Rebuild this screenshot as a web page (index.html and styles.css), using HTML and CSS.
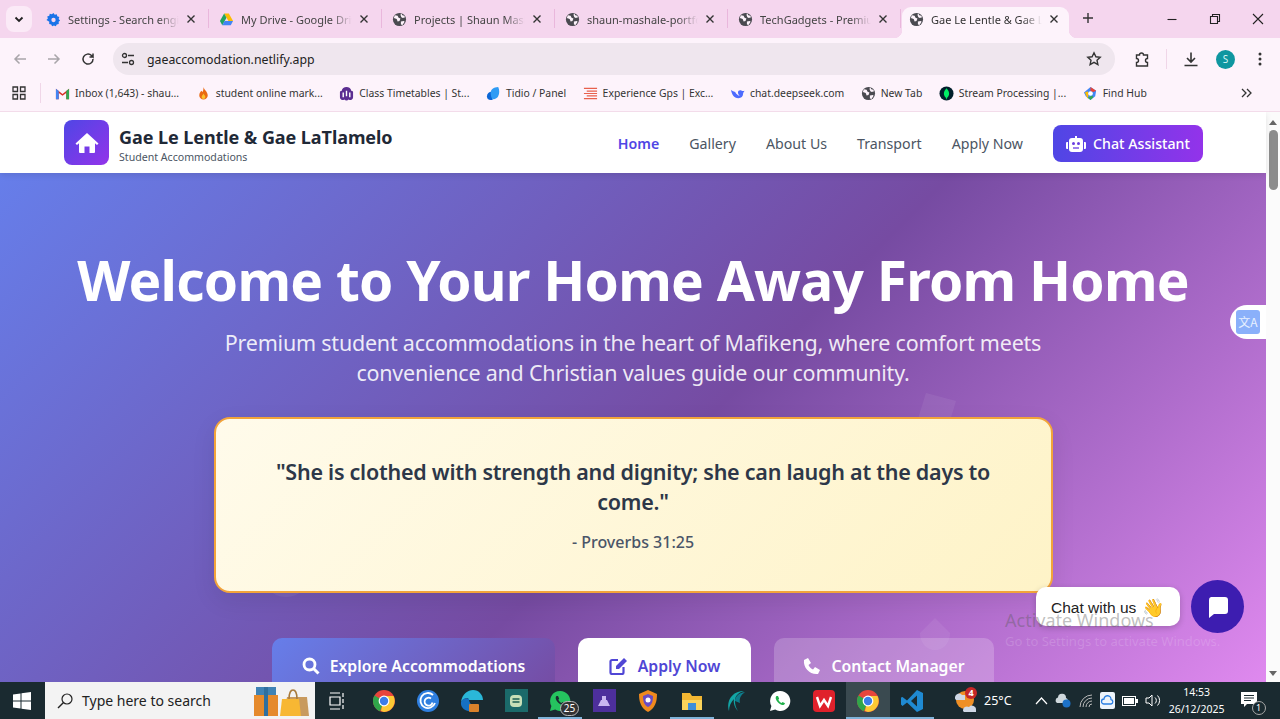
FILE: index.html
```html
<!DOCTYPE html>
<html lang="en">
<head>
  <meta charset="UTF-8" />
  <title>Gae Le Lentle &amp; Gae LaTlamelo</title>
  <link rel="stylesheet" href="styles.css">
</head>
<body>
  <svg class="defs" width="0" height="0">
    <symbol id="globe" viewBox="0 0 16 16"><circle cx="8" cy="8" r="7" fill="#4a4a50"/><path d="M3 3.500l3 .5 1 2 2 1-1 2.500-2 .5-1-2.500-3-1zM10 1.500l1 2 2 .5 1 1.500-2.500 1-1.500-1-1-2.500zM9.500 10l3-.5 1 1-2.500 3.500-1.500-1z" fill="#fdf3fb"/></symbol>
    <symbol id="chrome" viewBox="0 0 24 24"><circle cx="12" cy="12" r="11" fill="#e8453c"/><path d="M12 12L2.500 6.500A11 11 0 0 0 8 22.300z" fill="#30a64a"/><path d="M12 7h9.500A11 11 0 0 1 12 23l-3-1z" fill="#fcc934"/><circle cx="12" cy="12" r="5.400" fill="#fff"/><circle cx="12" cy="12" r="4.200" fill="#3b7de8"/></symbol>
    <symbol id="close" viewBox="0 0 10 10"><path d="M1.500 1.500l7 7M8.500 1.500l-7 7" stroke="#333" stroke-width="1.400" fill="none"/></symbol>
    <symbol id="wa" viewBox="0 0 24 24"><path d="M12 2a10 10 0 0 0-8.600 15L2 22l5.200-1.400A10 10 0 1 0 12 2z" fill="currentColor"/><path d="M8.500 7c-1 1-1.200 2.500 0 4.500 1.300 2.200 3.200 3.800 5.500 4.500 1.500.4 2.800-.5 3-1.800l-2.400-1.300-1 1.100c-1.400-.6-2.600-1.800-3.300-3.200l.9-1L10 7z" fill="var(--wa-in)"/></symbol>
  </svg>

  <div class="tabstrip">
    <button class="tab-search"><svg width="10" height="10" viewBox="0 0 10 10"><path d="M1.500 3.500L5 7l3.500-3.500" stroke="#222" stroke-width="1.800" fill="none"/></svg></button>
    <div class="tab">
      <svg class="fav" viewBox="0 0 16 16"><path d="M8 1l1.300 1.800 2.200-.5.500 2.200 2.200.7-.7 2.300 1.500 1.500-1.500 1.500.1 2.200-2.200.5-.9 2.100-2-.9-2 .9-.9-2.100-2.200-.5.1-2.200L.5 8.500 2 7l-.7-2.300 2.200-.7.500-2.200 2.200.5z" fill="#1a73e8"/><circle cx="8" cy="8.500" r="2.300" fill="#f5d6ee"/></svg>
      <span class="tab-name">Settings - Search engine</span>
      <svg class="tab-x"><use href="#close"/></svg>
    </div>
    <div class="tab">
      <svg class="fav" viewBox="0 0 16 16"><path d="M5.500 1.500h5L15 9.500h-5z" fill="#fbbc04"/><path d="M5.500 1.500L1 9.500l2.500 4.500L8 6z" fill="#1fa463"/><path d="M3.500 14h9l2.500-4.500H6z" fill="#4285f4"/></svg>
      <span class="tab-name">My Drive - Google Drive</span>
      <svg class="tab-x"><use href="#close"/></svg>
    </div>
    <div class="tab">
      <svg class="fav"><use href="#globe"/></svg>
      <span class="tab-name">Projects | Shaun Mashale</span>
      <svg class="tab-x"><use href="#close"/></svg>
    </div>
    <div class="tab">
      <svg class="fav"><use href="#globe"/></svg>
      <span class="tab-name">shaun-mashale-portfolio</span>
      <svg class="tab-x"><use href="#close"/></svg>
    </div>
    <div class="tab">
      <svg class="fav"><use href="#globe"/></svg>
      <span class="tab-name">TechGadgets - Premium</span>
      <svg class="tab-x"><use href="#close"/></svg>
    </div>
    <div class="tab active">
      <svg class="fav"><use href="#globe"/></svg>
      <span class="tab-name">Gae Le Lentle &amp; Gae LaTlamelo</span>
      <svg class="tab-x"><use href="#close"/></svg>
    </div>
    <svg class="new-tab" width="12" height="12" viewBox="0 0 12 12"><path d="M6 1v10M1 6h10" stroke="#333" stroke-width="1.400"/></svg>
    <div class="win-btns">
      <svg width="12" height="12" viewBox="0 0 12 12"><path d="M1.500 6.500h9" stroke="#222" stroke-width="1.100"/></svg>
      <svg width="12" height="12" viewBox="0 0 12 12"><path d="M1.500 3.500h7v7h-7zM3.500 3.500v-2h7v7h-2" stroke="#222" stroke-width="1.100" fill="none"/></svg>
      <svg width="12" height="12" viewBox="0 0 12 12"><path d="M1 1l10 10M11 1L1 11" stroke="#222" stroke-width="1.100"/></svg>
    </div>
  </div>

  <div class="toolbar">
    <svg class="tool dim" viewBox="0 0 16 16"><path d="M14 8H3M7.500 3.500L3 8l4.500 4.500" stroke="#a9a5aa" stroke-width="1.500" fill="none"/></svg>
    <svg class="tool dim" viewBox="0 0 16 16"><path d="M2 8h11M8.500 3.500L13 8l-4.500 4.500" stroke="#a9a5aa" stroke-width="1.500" fill="none"/></svg>
    <svg class="tool" viewBox="0 0 16 16"><path d="M13 8a5 5 0 1 1-1.500-3.500L13 6V2.500M13 6H9.500" stroke="#333" stroke-width="1.500" fill="none"/></svg>
    <div class="omnibox">
      <svg class="site-icon" width="14" height="14" viewBox="0 0 14 14"><circle cx="3.500" cy="3.500" r="2" stroke="#333" stroke-width="1.300" fill="none"/><path d="M7 3.500h6M1 10.500h6" stroke="#333" stroke-width="1.300"/><circle cx="10.500" cy="10.500" r="2" stroke="#333" stroke-width="1.300" fill="none"/></svg>
      <span class="url">gaeaccomodation.netlify.app</span>
      <svg class="star" width="16" height="16" viewBox="0 0 16 16"><path d="M8 1.800l1.900 4 4.300.5-3.200 3 .9 4.300L8 11.400l-3.900 2.200.9-4.300-3.200-3 4.300-.5z" stroke="#333" stroke-width="1.400" fill="none"/></svg>
    </div>
    <svg class="tool ext" viewBox="0 0 16 16"><path d="M2.500 4h3a2 2 0 0 1 4 0h4v3.500a2 2 0 0 0 0 4V15h-11v-3.500a2 2 0 0 0 0-4z" stroke="#333" stroke-width="1.400" fill="none"/></svg>
    <span class="tool-sep"></span>
    <svg class="tool download" viewBox="0 0 16 16"><path d="M8 1.500v9M4 7l4 4 4-4M1.500 14.500h13" stroke="#333" stroke-width="1.600" fill="none"/></svg>
    <span class="avatar">S</span>
    <svg class="tool menu" viewBox="0 0 16 16"><circle cx="8" cy="3" r="1.500" fill="#333"/><circle cx="8" cy="8" r="1.500" fill="#333"/><circle cx="8" cy="13" r="1.500" fill="#333"/></svg>
  </div>

  <div class="bookmarks">
    <svg class="apps" width="14" height="14" viewBox="0 0 14 14"><path d="M1 1h4.500v4.500H1zM8.500 1H13v4.500H8.500zM1 8.500h4.500V13H1zM8.500 8.500H13V13H8.500z" stroke="#333" stroke-width="1.300" fill="none"/></svg>
    <span class="bm-sep"></span>
    <div class="bm"><svg class="fav" viewBox="0 0 16 16"><path d="M1 14V3l7 5.500L15 3v11h-3V7.500L8 10.500 4 7.500V14z" fill="#d93025"/><path d="M1 14V3l3 2.300V14z" fill="#4285f4"/><path d="M15 14V3l-3 2.300V14z" fill="#34a853"/></svg>Inbox (1,643) - shau...</div>
    <div class="bm"><svg class="fav" viewBox="0 0 16 16"><path d="M8 1c.5 3 4.500 5 4.500 9a4.500 4.500 0 0 1-9 0C3.500 7 5 6.500 5.500 5c.8.5 1.300 1 1.500 1.500C7.800 5 8 3 8 1z" fill="#ea6a12"/><path d="M8 8c.5 1.500 2 2.300 2 3.800a2 2 0 0 1-4 0C6 10.500 7.500 9.500 8 8z" fill="#fbc02d"/></svg>student online mark...</div>
    <div class="bm"><svg class="fav" viewBox="0 0 16 16"><path d="M1 6.500a2 2 0 0 1 2-1.500c0-2.500 2.500-4 5-4s5 1.500 5 4a2 2 0 0 1 2 1.500V12a3 3 0 0 1-4.700 2.500 3 3 0 0 1-4.600 0A3 3 0 0 1 1 12z" fill="#5b2d91"/><path d="M4.500 7v5M8 5v6M11.500 7v5" stroke="#fff" stroke-width="1.500"/></svg>Class Timetables | St...</div>
    <div class="bm"><svg class="fav" viewBox="0 0 16 16"><path d="M1 11a5 5 0 0 1 5-5h1v9H5a4 4 0 0 1-4-4z" fill="#0b66d6"/><path d="M5 7c0-3 3-6 8-6 1.500 3 1.500 7 0 10-1 2-3 3-5 3-2 0-3-3-3-7z" fill="#2f9bf4"/></svg>Tidio / Panel</div>
    <div class="bm"><svg class="fav" viewBox="0 0 16 16"><path d="M1 2.500h14M4 5.500h11M1 8h14M4 10.500h11M1 13.500h14" stroke="#e8604c" stroke-width="1.300"/></svg>Experience Gps | Exc...</div>
    <div class="bm"><svg class="fav" viewBox="0 0 16 16"><path d="M1 4c1 5 3 9 8 9 3 0 5-2 5-5 0-1 1-2 1.500-3-1 .5-2 .5-3 0-2-1-4 0-4 2 0 1.500 1 3 2 3.500-2 0-4-2-5-4C3.500 5.500 2 5 1 4z" fill="#4d6bfe"/></svg>chat.deepseek.com</div>
    <div class="bm"><svg class="fav"><use href="#globe"/></svg>New Tab</div>
    <div class="bm"><svg class="fav" viewBox="0 0 16 16"><circle cx="8" cy="8" r="7.500" fill="#001e2b"/><path d="M8 2.500c2 2 2.800 4 2.800 5.800S9.500 11.800 8.400 12.800V14h-.8v-1.200C6.500 11.800 5.200 10.100 5.200 8.300S6 4.500 8 2.500z" fill="#00ed64"/></svg>Stream Processing |...</div>
    <div class="bm"><svg class="fav" viewBox="0 0 16 16"><path d="M8 1l6 4-1 6-5 4-5-4-2-4z" fill="#4285f4"/><path d="M8 1l6 4-3 1.500-3-1z" fill="#ea4335"/><path d="M2 7l3-1.500 1 3-1 5z" fill="#fbbc04"/><path d="M5 12.500L8 15l3-3-1-2z" fill="#34a853"/><circle cx="8" cy="8" r="2.500" fill="#fff"/></svg>Find Hub</div>
    <svg class="bm-more" width="12" height="12" viewBox="0 0 12 12"><path d="M2 2l4 4-4 4M7 2l4 4-4 4" stroke="#333" stroke-width="1.300" fill="none"/></svg>
  </div>

  <div class="viewport">
    <div class="page">
      <nav class="site-nav">
        <div class="brand">
          <span class="brand-mark"><svg width="24" height="22" viewBox="0 0 24 22"><path d="M12 1L.5 11.500l1.500 1.500L4 11.300V20a1 1 0 0 0 1 1h4.500v-6.500h5V21H19a1 1 0 0 0 1-1v-8.700l2 1.700 1.500-1.500z" fill="#fff"/></svg></span>
          <div class="brand-text">
            <div class="brand-name">Gae Le Lentle &amp; Gae LaTlamelo</div>
            <div class="brand-sub">Student Accommodations</div>
          </div>
        </div>
        <div class="nav-links">
          <a class="current">Home</a>
          <a>Gallery</a>
          <a>About Us</a>
          <a>Transport</a>
          <a>Apply Now</a>
          <a class="chat-btn"><svg width="20" height="16" viewBox="0 0 20 16"><path d="M9 0h2v2h3a3 3 0 0 1 3 3v8a3 3 0 0 1-3 3H6a3 3 0 0 1-3-3V5a3 3 0 0 1 3-3h3zM0 7a1 1 0 0 1 1-1h1v7H1a1 1 0 0 1-1-1zM18 6h1a1 1 0 0 1 1 1v5a1 1 0 0 1-1 1h-1z" fill="#fff"/><circle cx="7.500" cy="7.500" r="1.500" fill="#6a3de0"/><circle cx="12.500" cy="7.500" r="1.500" fill="#6a3de0"/><path d="M7 12h6" stroke="#6a3de0" stroke-width="1.300"/></svg>Chat Assistant</a>
        </div>
      </nav>

      <section class="hero">
        <svg class="ghost ghost-doc" width="40" height="34" viewBox="0 0 40 34"><path d="M10 0l30 8-8 26L2 26z" fill="#fff"/></svg>
        <svg class="ghost ghost-drop" width="30" height="32" viewBox="0 0 30 32"><path d="M15 0l15 15c0 9-6 17-15 17S0 24 0 15z" fill="#fff"/></svg>
        <svg class="ghost ghost-blob" width="64" height="40" viewBox="0 0 64 40"><circle cx="34" cy="14" r="24" fill="#fff"/><path d="M0 22h16v8H0z" fill="#fff"/></svg>
        <h1>Welcome to Your Home Away From Home</h1>
        <p class="lead">Premium student accommodations in the heart of Mafikeng, where comfort meets convenience and Christian values guide our community.</p>
        <div class="verse">
          <p class="verse-text">"She is clothed with strength and dignity; she can laugh at the days to come."</p>
          <p class="verse-ref">- Proverbs 31:25</p>
        </div>
        <div class="cta-row">
          <a class="cta cta-blue"><svg width="18" height="18" viewBox="0 0 18 18"><circle cx="7.500" cy="7.500" r="5.500" stroke="#fff" stroke-width="2.800" fill="none"/><path d="M11.500 11.500l5 5" stroke="#fff" stroke-width="3"/></svg>Explore Accommodations</a>
          <a class="cta cta-white"><svg width="19" height="18" viewBox="0 0 19 18"><path d="M9 3H3a1.500 1.500 0 0 0-1.500 1.500v11A1.500 1.500 0 0 0 3 17h10a1.500 1.500 0 0 0 1.500-1.500V10" stroke="#5046d5" stroke-width="2.200" fill="none"/><path d="M7 9L15 1l3 3-8 8H7z" fill="#5046d5"/></svg>Apply Now</a>
          <a class="cta cta-glass"><svg width="18" height="18" viewBox="0 0 18 18"><path d="M1 3l4-2 3 5-2.500 2c1 2 2.500 3.500 4.500 4.500l2-2.500 5 3-2 4c-8 1-15-6-14-14z" fill="#fff"/></svg>Contact Manager</a>
        </div>

        <div class="translate-tab"><span class="translate-icon">文A</span></div>
        <div class="chat-bubble">Chat with us <span class="wave">👋</span></div>
        <div class="watermark">
          <div class="wm-title">Activate Windows</div>
          <div class="wm-sub">Go to Settings to activate Windows.</div>
        </div>
        <div class="chat-launcher"><svg width="24" height="24" viewBox="0 0 24 24"><path d="M5 2h14a3 3 0 0 1 3 3v11a3 3 0 0 1-3 3H8l-5 4V5a3 3 0 0 1 2-3z" fill="#fff"/></svg></div>
      </section>
    </div>
    <div class="scrollbar">
      <span class="arrow up"></span>
      <span class="thumb"></span>
      <span class="arrow down"></span>
    </div>
  </div>

  <div class="taskbar">
    <svg class="start" width="18" height="18" viewBox="0 0 18 18"><path d="M0 2.500l7.500-1v7H0zM8.500 1.300L18 0v8.500H8.500zM0 9.500h7.500v7L0 15.500zM8.500 9.500H18V18l-9.500-1.300z" fill="#fff"/></svg>
    <div class="search-box">
      <svg width="18" height="18" viewBox="0 0 18 18"><circle cx="11" cy="7" r="5" stroke="#222" stroke-width="1.200" fill="none"/><path d="M7.500 10.500L2 16" stroke="#222" stroke-width="1.400"/></svg>
      <span class="search-text">Type here to search</span>
      <svg class="gifts" width="58" height="34" viewBox="0 0 58 34"><path d="M3 11h24v21H3z" fill="#e58a2c"/><path d="M5 3h20v8H5z" fill="#3f83b5"/><path d="M13 3h4v29h-4z" fill="#2f6f9e"/><path d="M36 13h20l2 19H32z" fill="#c89a5e"/><path d="M31 15h17l2 17H29z" fill="#f7b733"/><path d="M38 15c0-12 8-12 8 0" stroke="#a87b3c" stroke-width="1.500" fill="none"/></svg>
    </div>
    <div class="tb-slot task-view"><svg width="16" height="18" viewBox="0 0 16 18"><path d="M1 1h10M1 17h10M1 5h10v8H1zM14 1v4M14 7v4M14 13v4" stroke="#fff" stroke-width="1.200" fill="none"/></svg></div>
    <div class="tb-slot"><svg class="tb-icon"><use href="#chrome"/></svg></div>
    <div class="tb-slot"><svg class="tb-icon" viewBox="0 0 24 24"><circle cx="12" cy="12" r="11" fill="#2f7fe0"/><path d="M17 6a7.500 7.500 0 1 0 2 8M15 9.500a4 4 0 1 0 1.500 4" stroke="#fff" stroke-width="1.800" fill="none"/></svg></div>
    <div class="tb-slot"><svg class="tb-icon" viewBox="0 0 24 24"><path d="M1 13C2 5 8 1 13 1c6 0 10 5 10 10H9c0-3-6-2-8 2z" fill="#2ab7d8"/><path d="M1 13c1-3 5-5 8-3 0 4 3 7 6 7v5c-7 2-15-2-14-9z" fill="#1570c4"/><rect x="9" y="15" width="10" height="8" rx="1" fill="#d9822b"/></svg></div>
    <div class="tb-slot"><span class="square teal"><svg width="16" height="16" viewBox="0 0 16 16"><rect x="2" y="2" width="12" height="12" rx="4" fill="#c7e0b8"/><path d="M4.500 6h7M4.500 9h7" stroke="#1b5e52" stroke-width="1.300"/></svg></span></div>
    <div class="tb-slot running"><svg class="tb-icon wa-green"><use href="#wa"/></svg><span class="count">25</span></div>
    <div class="tb-slot"><span class="square purple"><svg width="14" height="14" viewBox="0 0 14 14"><path d="M1 12h12L10 6H9V2H5v4H4z" fill="#c9b6f0"/></svg></span></div>
    <div class="tb-slot"><svg class="tb-icon" viewBox="0 0 24 24"><path d="M12 1l9 4c0 8-2 14-9 18C5 19 3 13 3 5z" fill="#f08a1d"/><path d="M12 5l5 2c0 5-1 9-5 11-4-2-5-6-5-11z" fill="#6a4bc4"/><circle cx="12" cy="11" r="2.500" fill="#fff"/></svg></div>
    <div class="tb-slot running"><svg class="tb-icon" viewBox="0 0 24 24"><path d="M2 4h8l2 3h10v14H2z" fill="#f2b632"/><path d="M2 11h20v10H2z" fill="#fbd45b"/><rect x="8" y="14" width="8" height="7" fill="#3f8fd8"/></svg></div>
    <div class="tb-slot"><svg class="tb-icon" viewBox="0 0 24 24"><path d="M5 22C2 12 8 2 20 2c-7 2-9 6-9 10 0 4 1 7 3 10-3-3-5-8-4-12-3 3-5 7-5 12z" fill="#12a5a5"/><path d="M11 12c0-4 3-8 10-9-4 3-6 6-5 11" fill="#0d7c8c"/></svg></div>
    <div class="tb-slot"><svg class="tb-icon wa-white"><use href="#wa"/></svg></div>
    <div class="tb-slot"><svg class="tb-icon" viewBox="0 0 24 24"><rect x="1" y="1" width="22" height="22" rx="4" fill="#e0212b"/><path d="M5 8l3 9 4-6 4 6 3-9" stroke="#fff" stroke-width="2.400" fill="none"/></svg></div>
    <div class="tb-slot current-app"><svg class="tb-icon"><use href="#chrome"/></svg></div>
    <div class="tb-slot running"><svg class="tb-icon" viewBox="0 0 24 24"><path d="M17 1l6 3v16l-6 3-10-9.500-4.500 3.500L1 15.500V8.500L2.500 8 7 11.500z" fill="#1f8ad2"/><path d="M17 6.500L11 12l6 5.500z" fill="#1a2a30"/></svg></div>
    <div class="weather">
      <svg width="26" height="30" viewBox="0 0 26 30"><circle cx="12" cy="14" r="9" fill="#ef8f25"/><path d="M2 11a4 4 0 0 1 7-2h3v5H3a3 3 0 0 1-1-3zM10 25a4 4 0 0 1 6-4 4 4 0 0 1 7 3v2H11z" fill="#cfd8e6"/><circle cx="18" cy="7" r="6" fill="#c62828"/><text x="18" y="10" class="badge-num">4</text></svg>
      <span>25°C</span>
    </div>
    <div class="tray">
      <svg width="13" height="8" viewBox="0 0 13 8"><path d="M1 7l5.500-6L12 7" stroke="#fff" stroke-width="1.200" fill="none"/></svg>
      <svg width="16" height="15" viewBox="0 0 16 15"><path d="M2 10a3 3 0 0 1 1-5.500A4 4 0 0 1 11 5a3 3 0 0 1 1 5z" fill="#cfd8dc"/><circle cx="11.500" cy="10.500" r="4" fill="#1d72c8"/></svg>
      <svg width="15" height="15" viewBox="0 0 15 15"><path d="M2 14a12 12 0 0 1 12-12M5 14a9 9 0 0 1 9-9M8 14a6 6 0 0 1 6-6M11 14a3 3 0 0 1 3-3" stroke="#bbb" stroke-width="1" fill="none"/></svg>
      <svg width="15" height="17" viewBox="0 0 15 17"><rect width="15" height="17" rx="2" fill="#eef4fb"/><path d="M4 12a2.500 2.500 0 0 1 0-5 3.500 3.500 0 0 1 7 .5 2.300 2.300 0 0 1 0 4.500z" stroke="#2a7de1" stroke-width="1.300" fill="none"/></svg>
      <svg width="16" height="10" viewBox="0 0 16 10"><rect x=".5" y=".5" width="13" height="9" stroke="#fff" fill="none"/><rect x="2" y="2" width="10" height="6" fill="#fff"/><rect x="14" y="3" width="2" height="4" fill="#fff"/></svg>
      <svg width="16" height="15" viewBox="0 0 16 15"><path d="M1 5h3l3-3v11l-3-3H1z" stroke="#fff" stroke-width="1" fill="none"/><path d="M10 4.500a4 4 0 0 1 0 6M12.500 2.500a7 7 0 0 1 0 10" stroke="#fff" stroke-width="1" fill="none"/></svg>
    </div>
    <div class="clock"><div>14:53</div><div>26/12/2025</div></div>
    <div class="notif"><svg width="20" height="20" viewBox="0 0 20 20"><path d="M1 2h16v12H7l-3 3v-3H1z" fill="#fff"/><path d="M4 5.500h10M4 8h10M4 10.500h7" stroke="#1a2a30"/></svg><span class="notif-num">1</span></div>
  </div>
</body>
</html>
```

FILE: styles.css
```css
/* Base */
html, body {
  margin: 0;
  height: 719px;
  overflow: hidden;
}
body {
  font-family: "Noto Sans", "Open Sans", sans-serif;
  display: flex;
  flex-direction: column;
  background: #fdf3fb;
  color: #333;
}
.defs { position: absolute; }
.fav {
  width: 15px;
  height: 15px;
  flex: none;
}

/* Tab strip */
.tabstrip {
  height: 38px;
  flex: none;
  display: flex;
  align-items: flex-end;
  background: #f5d6ee;
  padding-left: 6px;
}
.tab-search {
  width: 26px;
  height: 26px;
  margin: 0 4px 6px 0;
  padding: 0;
  border: 0;
  border-radius: 8px;
  background: #fbeaf7;
  display: flex;
  align-items: center;
  justify-content: center;
}
.tab {
  width: 173px;
  height: 31px;
  box-sizing: border-box;
  padding: 0 13px 7px 10px;
  display: flex;
  align-items: center;
  gap: 7px;
  font-size: 11px;
  color: #444;
  background: linear-gradient(#e9b7dc, #e9b7dc) no-repeat right 0 top 2px / 1px 19px;
}
.tab-name {
  flex: 1;
  min-width: 0;
  white-space: nowrap;
  overflow: hidden;
  -webkit-mask-image: linear-gradient(90deg, #000 82%, transparent 100%);
  mask-image: linear-gradient(90deg, #000 82%, transparent 100%);
}
.tab-x {
  width: 10px;
  height: 10px;
  flex: none;
}
.tab.active {
  width: 167px;
  margin-left: 1px;
  padding: 0 10px 7px 7px;
  background: #fdf3fb;
  border-radius: 9px 9px 0 0;
  color: #333;
  position: relative;
}
/* flared bottom corners of the active tab */
.tab.active::before,
.tab.active::after {
  content: "";
  position: absolute;
  bottom: 0;
  width: 8px;
  height: 8px;
}
.tab.active::before {
  left: -8px;
  background: radial-gradient(circle at 0 0, transparent 8px, #fdf3fb 8.5px);
}
.tab.active::after {
  right: -8px;
  background: radial-gradient(circle at 100% 0, transparent 8px, #fdf3fb 8.5px);
}
.new-tab { margin: 0 0 14px 13px; }
.win-btns {
  margin-left: auto;
  display: flex;
  gap: 31px;
  padding: 0 16px 13px 0;
}

/* Toolbar */
.toolbar {
  height: 37px;
  flex: none;
  box-sizing: border-box;
  padding: 5px 0 0 12px;
  display: flex;
  align-items: center;
  background: #fdf3fb;
}
.tool {
  width: 16px;
  height: 16px;
  flex: none;
  margin-right: 18px;
}
.omnibox {
  width: 1002px;
  height: 32px;
  flex: none;
  margin-left: -1px;
  box-sizing: border-box;
  padding: 0 13px 0 8px;
  display: flex;
  align-items: center;
  gap: 12px;
  border-radius: 16px;
  background: #efe6ee;
}
.url {
  flex: 1;
  font-size: 12.3px;
  color: #222;
}
.tool.ext { margin: 0 0 0 19px; }
.tool-sep {
  width: 1px;
  height: 20px;
  flex: none;
  margin: 0 16px;
  background: #f0d6e8;
}
.tool.download { margin-right: 17px; }
.tool.menu { margin-right: 0; }
.avatar {
  width: 19px;
  height: 19px;
  flex: none;
  margin-right: 17px;
  border-radius: 50%;
  background: #0f96a0;
  color: #d8f5f5;
  font-size: 10px;
  line-height: 19px;
  text-align: center;
}

/* Bookmarks */
.bookmarks {
  height: 37px;
  flex: none;
  display: flex;
  align-items: center;
  padding-left: 12px;
  background: #fdf3fb;
  border-bottom: 1px solid #f3dcea;
  box-sizing: border-box;
}
.bm-sep {
  width: 1px;
  height: 20px;
  margin: 0 14px;
  background: #f0d6e8;
}
.bm {
  display: flex;
  align-items: center;
  gap: 5px;
  margin-right: 16.5px;
  font-size: 10.4px;
  color: #333;
  white-space: nowrap;
}
.bm-more { margin-left: auto; margin-right: 28px; }

/* Page */
.viewport {
  height: 570px;
  flex: none;
  display: flex;
  overflow: hidden;
  background: #fff;
}
.page {
  width: 1266px;
  flex: none;
  display: flex;
  flex-direction: column;
}
.site-nav {
  height: 61px;
  flex: none;
  box-sizing: border-box;
  padding: 0 63px 0 64px;
  display: flex;
  align-items: center;
  justify-content: space-between;
  background: #fff;
  position: relative;
  z-index: 2;
  box-shadow: 0 2px 6px rgba(0, 0, 0, 0.1);
}
.brand {
  display: flex;
  align-items: center;
  gap: 10px;
}
.brand-mark {
  width: 45px;
  height: 45px;
  border-radius: 8px;
  background: linear-gradient(135deg, #4f46e5, #9333ea);
  display: flex;
  align-items: center;
  justify-content: center;
}
.brand-text { padding-top: 4px; }
.brand-name {
  font-size: 18px;
  line-height: 26px;
  font-weight: 700;
  letter-spacing: -0.07px;
  color: #1f2937;
}
.brand-sub {
  font-size: 10.6px;
  line-height: 15px;
  color: #4b5563;
}
.nav-links {
  padding-top: 2px;
  display: flex;
  align-items: center;
  gap: 30px;
  font-size: 14.2px;
  color: #4b5563;
}
.nav-links .current {
  color: #4f46e5;
  font-weight: 600;
}
.chat-btn {
  width: 150px;
  height: 37px;
  box-sizing: border-box;
  display: flex;
  align-items: center;
  justify-content: center;
  gap: 7px;
  border-radius: 8px;
  background: linear-gradient(90deg, #4f46e5, #9333ea);
  color: #fff;
  font-weight: 500;
}

/* Hero */
.hero {
  flex: 1;
  position: relative;
  padding-top: 71px;
  text-align: center;
  color: #fff;
  background: linear-gradient(135deg, #667eea 0%, #764ba2 50%, #f093fb 100%) no-repeat;
  background-size: 1266px 640px;
  overflow: hidden;
}
.hero h1 {
  margin: 0;
  font-size: 55px;
  line-height: 72px;
  font-weight: 700;
  letter-spacing: -0.75px;
  white-space: nowrap;
}
.lead {
  width: 840px;
  margin: 12px auto 0;
  font-size: 21.5px;
  line-height: 30px;
  letter-spacing: -0.22px;
  color: rgba(255, 255, 255, 0.88);
}
.verse {
  width: 839px;
  height: 176px;
  margin: 29px auto 0;
  box-sizing: border-box;
  padding: 38px 56px 0;
  border: 2px solid #f2a43a;
  border-radius: 16px;
  background: linear-gradient(135deg, #fffbeb, #fef3c7);
  color: #2d3748;
  position: relative;
  box-shadow: 0 8px 24px rgba(0, 0, 0, 0.08);
}
.verse-text {
  margin: 0;
  font-size: 21.5px;
  line-height: 30px;
  font-weight: 600;
  letter-spacing: -0.25px;
}
.verse-ref {
  margin: 13px 0 0;
  font-size: 16px;
  line-height: 24px;
  font-weight: 500;
  color: #4a5568;
}
.cta-row {
  margin-top: 45px;
  display: flex;
  justify-content: center;
  gap: 23px;
}
.cta {
  height: 56px;
  box-sizing: border-box;
  display: flex;
  align-items: center;
  justify-content: center;
  gap: 10px;
  border-radius: 10px;
  font-size: 15.8px;
  font-weight: 600;
}
.cta-blue {
  width: 283px;
  background: linear-gradient(135deg, #667eea, #764ba2);
}
.cta-white {
  width: 173px;
  background: #fff;
  color: #5046d5;
}
.cta-glass {
  width: 220px;
  background: rgba(255, 255, 255, 0.2);
}
.ghost {
  position: absolute;
  opacity: 0.06;
}
.ghost-doc { left: 916px; top: 220px; }
.ghost-drop { left: 920px; top: 445px; }
.ghost-blob { left: 252px; top: 386px; }

/* Floating widgets */
.translate-tab {
  position: absolute;
  right: 0;
  top: 132px;
  width: 36px;
  height: 34px;
  box-sizing: border-box;
  padding: 5px 0 0 6px;
  border-radius: 17px 0 0 17px;
  background: #fff;
}
.translate-icon {
  display: block;
  width: 24px;
  height: 24px;
  border-radius: 3px;
  background: #8ab0fa;
  color: #e8f0ff;
  font-family: "Noto Sans CJK SC", "Noto Sans", sans-serif;
  font-size: 12px;
  line-height: 24px;
  text-align: center;
}
.watermark {
  position: absolute;
  left: 1005px;
  top: 435px;
  z-index: 3;
  white-space: nowrap;
  text-align: left;
  color: rgba(255, 255, 255, 0.16);
}
.wm-title { font-size: 18px; line-height: 24px; color: rgba(90, 90, 90, 0.4); }
.wm-sub { font-size: 13px; line-height: 18px; }
.chat-bubble {
  position: absolute;
  left: 1036px;
  top: 414px;
  width: 144px;
  height: 39px;
  box-sizing: border-box;
  padding: 2px 0 0 15px;
  display: flex;
  align-items: center;
  gap: 6px;
  border-radius: 10px;
  background: #fff;
  box-shadow: 0 2px 6px rgba(0, 0, 0, 0.2);
  color: #222;
  font-family: "Liberation Sans", sans-serif;
  font-size: 15.5px;
  white-space: nowrap;
}
.wave { font-size: 18px; }
.chat-launcher {
  position: absolute;
  left: 1191px;
  top: 407px;
  width: 53px;
  height: 53px;
  border-radius: 50%;
  background: #3d1db0;
  display: flex;
  align-items: center;
  justify-content: center;
}

/* Scrollbar */
.scrollbar {
  width: 14px;
  flex: none;
  display: flex;
  flex-direction: column;
  align-items: center;
  background: #fbfbfb;
  position: relative;
}
.arrow {
  position: absolute;
  width: 0;
  height: 0;
  border-left: 4px solid transparent;
  border-right: 4px solid transparent;
}
.arrow.up { top: 8px; border-bottom: 5px solid #666; }
.arrow.down { bottom: 6px; border-top: 5px solid #666; }
.thumb {
  width: 9px;
  height: 60px;
  margin-top: 18px;
  border-radius: 5px;
  background: #8c8c8c;
}

/* Taskbar */
.taskbar {
  height: 37px;
  flex: none;
  display: flex;
  align-items: center;
  background: #1a2a30;
  color: #fff;
  font-size: 12px;
}
.start { margin: 0 14px 0 13px; }
.search-box {
  width: 270px;
  height: 37px;
  box-sizing: border-box;
  padding: 0 6px 0 11px;
  display: flex;
  align-items: center;
  gap: 8px;
  background: #f3f3f3;
  color: #222;
  font-size: 14px;
  overflow: hidden;
}
.search-text { flex: 1; }
.gifts { flex: none; }
.tb-slot {
  width: 44px;
  height: 37px;
  flex: none;
  box-sizing: border-box;
  display: flex;
  align-items: center;
  justify-content: center;
  position: relative;
}
.task-view { margin-right: 3px; }
.tb-icon {
  width: 24px;
  height: 24px;
}
.wa-green { color: #25c35f; --wa-in: #1a2a30; }
.wa-white { color: #fff; --wa-in: #22b14c; }
.running { box-shadow: inset 0 -2px 0 #7fb3d9; }
.current-app {
  background: #3a4a50;
  box-shadow: inset 0 -2px 0 #7fb3d9;
}
.square {
  width: 23px;
  height: 23px;
  display: flex;
  align-items: center;
  justify-content: center;
}
.teal { background: #1b6a6a; }
.purple { background: #4d2f9c; }
.count {
  position: absolute;
  right: 3px;
  bottom: 3px;
  width: 19px;
  height: 15px;
  border-radius: 8px;
  background: #333;
  border: 1px solid #bbb;
  box-sizing: border-box;
  font-size: 10px;
  line-height: 13px;
  text-align: center;
}
.weather {
  margin-left: 19px;
  display: flex;
  align-items: center;
  gap: 5px;
  font-size: 12.5px;
}
.badge-num {
  font-size: 9px;
  font-weight: 700;
  fill: #fff;
  text-anchor: middle;
}
.tray {
  margin-left: 23px;
  display: flex;
  align-items: center;
  gap: 7px;
}
.clock {
  margin-left: 5px;
  width: 62px;
  font-size: 10.5px;
  line-height: 17px;
  text-align: center;
}
.notif {
  margin-left: 12px;
  position: relative;
  width: 22px;
  height: 22px;
}
.notif-num {
  position: absolute;
  right: -4px;
  bottom: -3px;
  width: 14px;
  height: 14px;
  border-radius: 50%;
  background: #1a2a30;
  border: 1px solid #aaa;
  box-sizing: border-box;
  font-size: 9px;
  line-height: 12px;
  text-align: center;
}
```
